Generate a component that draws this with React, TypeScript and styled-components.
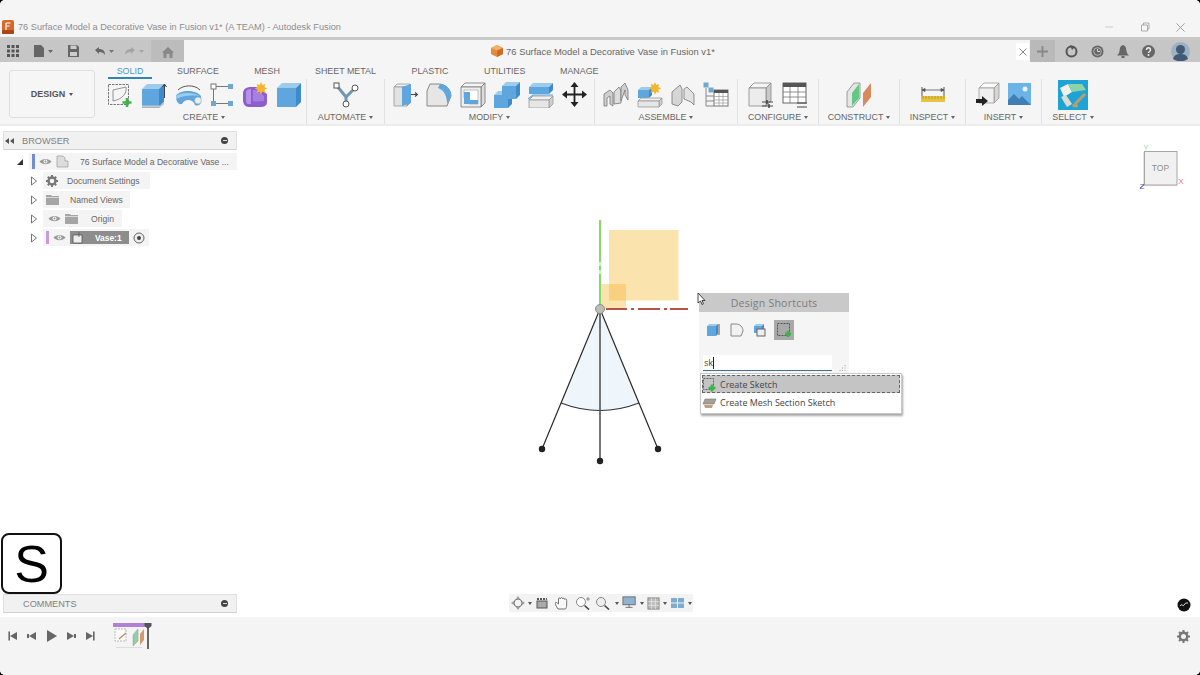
import React from "react";
import styled, { createGlobalStyle } from "styled-components";

const GlobalStyle = createGlobalStyle`
  html, body {
    margin: 0;
    padding: 0;
    background: #000;
  }
  * {
    box-sizing: border-box;
  }
`;

const Window = styled.div`
  width: 1200px;
  height: 675px;
  display: flex;
  flex-direction: column;
  overflow: hidden;
  border-radius: 5px;
  background: #fff;
  font-family: "Liberation Sans", Arial, sans-serif;
  color: #666;
`;

const TitleBar = styled.div`
  height: 37px;
  flex: none;
  display: flex;
  align-items: flex-end;
  padding: 0 0 3px 2px;
  background: #f5f5f5;
`;

const AppTitle = styled.span`
  flex: 1;
  margin-left: 4px;
  font-size: 9.2px;
  line-height: 14px;
  color: #8d8d8d;
`;

const WindowButtons = styled.div`
  display: flex;
  align-items: center;
  gap: 26px;
  padding: 0 15px 2px 0;
`;

const Rule = styled.div`
  height: 3px;
  flex: none;
  background: #c9c9c9;
`;

const TabStrip = styled.div`
  height: 22px;
  flex: none;
  display: flex;
  background: #c6c6c6;
`;

const StripLeft = styled.div`
  width: 151px;
  display: flex;
  align-items: center;
  padding-left: 7px;
  gap: 14.5px;
`;

const RedoSlot = styled.div`
  margin-left: -4px;
`;

const HomeTab = styled.div`
  width: 33px;
  display: flex;
  align-items: center;
  justify-content: center;
  padding-top: 3px;
  background: #bcbcbc;
`;

const DocTab = styled.div`
  flex: 1;
  display: flex;
  align-items: center;
  justify-content: center;
  gap: 3px;
  position: relative;
  padding-right: 8px;
  background: #f5f5f5;
  font-size: 9.4px;
  color: #666;
`;

const TabClose = styled.div`
  position: absolute;
  right: 1px;
  top: 3px;
  width: 13px;
  height: 17px;
  display: flex;
  align-items: center;
  justify-content: center;
  background: #fff;
`;

const StripRight = styled.div`
  width: 170px;
  display: flex;
  align-items: center;
`;

const NewTab = styled.div`
  width: 25px;
  height: 100%;
  margin-right: 3px;
  display: flex;
  align-items: center;
  justify-content: center;
  background: #b9b9b9;
`;

const StripIcon = styled.div<{ $w: number }>`
  width: ${(p) => p.$w}px;
  display: flex;
  justify-content: center;
`;

const Toolbar = styled.div`
  height: 64px;
  flex: none;
  display: flex;
  background: #f5f5f5;
  border-bottom: 2px solid #ececec;
`;

const DesignButton = styled.div`
  width: 86px;
  height: 48px;
  margin: 8px 7px 0 9px;
  display: flex;
  align-items: center;
  justify-content: center;
  gap: 4px;
  background: #f6f6f6;
  border: 1px solid #dedede;
  border-radius: 3px;
  font-size: 9px;
  font-weight: bold;
  color: #555;
`;

const ToolbarBody = styled.div`
  display: flex;
  flex-direction: column;
`;

const TabRow = styled.div`
  height: 17px;
  display: flex;
  padding-left: 6px;
`;

const RibbonTab = styled.div<{ $w: number; $gap: number; $active?: boolean }>`
  width: ${(p) => p.$w}px;
  margin-left: ${(p) => p.$gap}px;
  padding-top: 4px;
  text-align: center;
  font-size: 8.9px;
  line-height: 11px;
  white-space: nowrap;
  color: ${(p) => (p.$active ? "#4a9cc4" : "#666")};
  border-bottom: ${(p) => (p.$active ? "2px solid #2f86ad" : "0")};
`;

const GroupRow = styled.div`
  display: flex;
  height: 45px;
`;

const Group = styled.div<{ $w: number; $last?: boolean }>`
  width: ${(p) => p.$w}px;
  display: flex;
  flex-direction: column;
  align-items: center;
  padding-top: 1px;
  border-right: ${(p) => (p.$last ? "0" : "1px solid #e1e1e1")};
`;

const GroupIcons = styled.div`
  height: 29px;
  display: flex;
  align-items: center;
  gap: 8px;
`;

const GroupLabel = styled.div`
  margin-top: 3px;
  display: flex;
  align-items: center;
  gap: 3px;
  font-size: 8.9px;
  line-height: 11px;
  white-space: nowrap;
  color: #666;
`;

const Caret = styled.span<{ $color?: string }>`
  width: 0;
  height: 0;
  flex: none;
  border-left: 2.5px solid transparent;
  border-right: 2.5px solid transparent;
  border-top: 3px solid ${(p) => p.$color || "#555"};
`;

const Canvas = styled.div`
  flex: 1;
  position: relative;
  background: #fff;
`;

const Panel = styled.div`
  position: absolute;
  left: 3px;
  width: 234px;
  height: 19px;
  display: flex;
  align-items: center;
  background: #f1f1f1;
  border: 1px solid #e0e0e0;
  border-bottom-color: #d2d2d2;
  font-size: 9.2px;
  color: #808080;
`;

const BrowserWrap = styled.div`
  position: absolute;
  left: 0;
  top: 5px;
  width: 240px;
`;

const BrowserHead = styled(Panel)`
  position: static;
  margin-left: 3px;
`;

const PanelName = styled.span`
  flex: 1;
  margin-left: 6px;
`;

const PanelDot = styled.span`
  width: 7px;
  height: 7px;
  margin-right: 8px;
  border-radius: 50%;
  background: #444;
  position: relative;
  &::after {
    content: "";
    position: absolute;
    left: 1.5px;
    top: 3px;
    width: 4px;
    height: 1px;
    background: #ddd;
  }
`;

const CommentsPanel = styled(Panel)`
  top: 468px;
  padding-left: 13px;
`;

const TreeRows = styled.div`
  margin-top: 2px;
  display: flex;
  flex-direction: column;
`;

const TreeRow = styled.div<{ $indent: number }>`
  height: 19px;
  display: flex;
  align-items: center;
  padding-left: ${(p) => p.$indent}px;
`;

const TreeChip = styled.div<{ $w: number; $pad?: number }>`
  width: ${(p) => p.$w}px;
  height: 17px;
  margin-left: 5px;
  display: flex;
  align-items: center;
  gap: 4px;
  padding-left: ${(p) => p.$pad ?? 3}px;
  background: #f4f4f4;
  font-size: 8.6px;
  color: #666;
  white-space: nowrap;
`;

const TreeLabel = styled.span<{ $ml: number }>`
  margin-left: ${(p) => p.$ml}px;
`;

const ColorBar = styled.span<{ $color: string; $h: number }>`
  width: 3px;
  height: ${(p) => p.$h}px;
  flex: none;
  background: ${(p) => p.$color};
`;

const ActiveName = styled.span`
  width: 59px;
  height: 13px;
  display: flex;
  align-items: center;
  background: #8d8d8d;
  color: #fff;
  font-weight: bold;
  font-size: 8.4px;
`;

const Drawing = styled.svg`
  position: absolute;
  left: 530px;
  top: 84px;
`;

const ViewCube = styled.svg`
  position: absolute;
  left: 1130px;
  top: 14px;
`;

const Cursor = styled.svg`
  position: absolute;
  left: 697px;
  top: 166px;
  z-index: 3;
`;

const Shortcuts = styled.div`
  position: absolute;
  left: 699px;
  top: 167px;
  width: 150px;
  height: 80px;
  background: #f5f5f5;
`;

const ShortcutsHead = styled.div`
  height: 19px;
  background: #c9c9c9;
  text-align: center;
  font-family: "Open Sans", sans-serif;
  font-size: 10.6px;
  line-height: 20px;
  letter-spacing: 0.2px;
  color: #7d7d7d;
`;

const ShortcutIcons = styled.div`
  height: 22px;
  margin-top: 7px;
  padding-left: 4px;
  display: flex;
  align-items: center;
  gap: 3.5px;
`;

const ShortcutSlot = styled.div<{ $on?: boolean }>`
  width: 20px;
  height: 20px;
  display: flex;
  align-items: center;
  justify-content: center;
  background: ${(p) => (p.$on ? "#a9a9a9" : "transparent")};
`;

const SearchBox = styled.div`
  width: 129px;
  height: 16px;
  margin: 14px 0 0 4px;
  padding-left: 1px;
  display: flex;
  align-items: center;
  background: #fff;
  border-bottom: 1px solid #3e6f95;
  font-family: "Open Sans", sans-serif;
  font-size: 9px;
  color: #444;
`;

const Caretline = styled.span`
  width: 1px;
  height: 12px;
  background: #222;
`;

const Grip = styled.svg`
  position: absolute;
  right: 2px;
  bottom: 1px;
`;

const Results = styled.div`
  position: absolute;
  left: 700px;
  top: 247px;
  width: 202px;
  height: 41px;
  padding: 1px;
  background: #fff;
  border: 1px solid #c8c8c8;
  box-shadow: 1px 2px 2px rgba(0, 0, 0, 0.35);
  z-index: 2;
`;

const ResultRow = styled.div<{ $on?: boolean }>`
  height: 18px;
  display: flex;
  align-items: center;
  gap: 3px;
  padding: ${(p) => (p.$on ? "0" : "1px")} 0 0 0;
  font-family: "Open Sans", sans-serif;
  font-size: 8.95px;
  color: #444;
  background: ${(p) => (p.$on ? "#c4c4c4" : "transparent")};
  outline: ${(p) => (p.$on ? "1px dashed #666" : "0")};
  outline-offset: -1px;
`;

const Badge = styled.div`
  position: absolute;
  left: 1px;
  top: 407px;
  width: 61px;
  height: 61px;
  display: flex;
  align-items: center;
  justify-content: center;
  background: #fff;
  border: 2px solid #111;
  border-radius: 8px;
  font-size: 52px;
  line-height: 1;
  color: #000;
`;

const NavBar = styled.div`
  position: absolute;
  left: 509px;
  top: 468px;
  width: 184px;
  height: 18px;
  display: flex;
  align-items: center;
  gap: 3px;
  padding-left: 2px;
  background: #f3f3f3;
`;

const ChatDot = styled.svg`
  position: absolute;
  left: 1177px;
  top: 472px;
`;

const Timeline = styled.div`
  height: 58px;
  flex: none;
  display: flex;
  align-items: center;
  padding: 0 10px 20px 8px;
  background: #f4f4f4;
`;

const Transport = styled.div`
  width: 105px;
  display: flex;
  align-items: center;
  gap: 9px;
`;

const TimelineTrack = styled.div`
  flex: 1;
`;

function Glyph({ w = 26, h = 26, vb, children }: { w?: number; h?: number; vb?: string; children: React.ReactNode }) {
  return (
    <svg width={w} height={h} viewBox={vb || `0 0 ${w} ${h}`} style={{ display: "block", flex: "none" }}>
      {children}
    </svg>
  );
}

type BoxProps = { x: number; y: number; w: number; h: number; d: number; front?: string; top?: string; side?: string; stroke?: string };

// little isometric block, the app's icons are mostly built from these
function Box({ x, y, w, h, d, front = "#5ea6dd", top = "#9ccbec", side = "#3f8bc9", stroke = "none" }: BoxProps) {
  return (
    <g stroke={stroke} strokeWidth={0.8} strokeLinejoin="round">
      <polygon fill={top} points={`${x},${y + d} ${x + d},${y} ${x + w + d},${y} ${x + w},${y + d}`} />
      <polygon fill={side} points={`${x + w},${y + d} ${x + w + d},${y} ${x + w + d},${y + h} ${x + w},${y + d + h}`} />
      <polygon fill={front} points={`${x},${y + d} ${x + w},${y + d} ${x + w},${y + d + h} ${x},${y + d + h}`} />
    </g>
  );
}

const GreenPlus = ({ x, y, s = 4.5 }: { x: number; y: number; s?: number }) => (
  <path d={`M${x - s} ${y}H${x + s}M${x} ${y - s}V${y + s}`} stroke="#3bb54a" strokeWidth={2.6} />
);

const SketchIcon = () => (
  <Glyph>
    <rect x="1.5" y="2.5" width="20" height="20" fill="none" stroke="#777" strokeWidth="1" strokeDasharray="2.5 1" />
    <path d="M6 19V8L19 5M19 5C20 11 16 17 6 19" fill="none" stroke="#888" strokeWidth="0.9" />
    <GreenPlus x={20} y={20.5} />
  </Glyph>
);
const ExtrudeIcon = () => (
  <Glyph>
    <Box x={1} y={2} w={17} h={19} d={5} />
    <path d="M1 23.5h18l4-4v3l-4 3H1z" fill="#c9c9c9" />
    <path d="M23.5 16V2M21.5 5l2-3 2 3" stroke="#444" strokeWidth="1" fill="none" />
  </Glyph>
);
const RevolveIcon = () => (
  <Glyph w={27}>
    <path d="M1 14C4 8 20 7 26 14V20C25 24 22 24 20 23C18 17 10 16 7 22C3 23 1 19 1 14z" fill="#5ea6dd" />
    <path d="M1 14C5 10 19 10 25 14C19 13 8 13 1 17z" fill="#9ccbec" />
    <circle cx="23" cy="18.500" r="3.500" fill="#e6eef4" stroke="#9aa9b4" strokeWidth="0.7" />
    <path d="M3 8C8 3 19 2 25 8" fill="none" stroke="#555" strokeWidth="1" />
  </Glyph>
);
const PatternIcon = () => (
  <Glyph w={24}>
    <rect x="1" y="2" width="5" height="5" fill="#fff" stroke="#777" />
    <rect x="18" y="2" width="5" height="5" fill="#6fa8cf" />
    <rect x="1" y="19" width="5" height="5" fill="#6fa8cf" />
    <rect x="18" y="19" width="5" height="5" fill="#6fa8cf" />
    <path d="M6 4.5h12M6 21.5h12M3.5 7v12" stroke="#777" strokeWidth="1" />
  </Glyph>
);
const FormIcon = () => (
  <Glyph>
    <path d="M1 12C1 7 4 5 9 5H15L25 12V20C25 24 22 25 18 25H7C3 25 1 22 1 18z" fill="#8d5fcc" />
    <path d="M4 10c0-2 2-3 5-3v15H6c-1 0-2-1-2-3z" fill="#b590e8" />
    <path d="M11 8h3l8 6v5c-3 0-7 1-11 0z" fill="#a77fe0" />
    <path d="M19 0l1.4 3 3-1-1 3 3 1.4-3 1.4 1 3-3-1-1.4 3-1.4-3-3 1 1-3-3-1.4 3-1.4-1-3 3 1z" fill="#f2b632" />
  </Glyph>
);
const BoxIcon = () => (
  <Glyph>
    <Box x={1} y={1} w={19} h={19} d={5} />
  </Glyph>
);
const PressPullIcon = () => (
  <Glyph w={25}>
    <Box x={1} y={2} w={13} h={19} d={3} front="#e2e2e2" side="#4f9ad4" top="#efefef" stroke="#999" />
    <polygon points="9,5 18,2 18,21 9,24" fill="#5ea6dd" />
    <path d="M18 12.5h6M22 10.5l2.5 2-2.5 2" stroke="#444" strokeWidth="1.2" fill="none" />
  </Glyph>
);
const FilletIcon = () => (
  <Glyph>
    <path d="M1 24V9l3-7h9c6 0 12 5 12 12l-4 10z" fill="#e6e6e6" stroke="#888" />
    <path d="M14 2c6 0 11 5 11 12l-4 8c0-8-3-14-9-16z" fill="#5ea6dd" />
  </Glyph>
);
const ShellIcon = () => (
  <Glyph>
    <Box x={1} y={1} w={20} h={20} d={4} front="#efefef" side="#dcdcdc" top="#f5f5f5" stroke="#777" />
    <path d="M4 8h14v14H9v-6H4z" fill="#fff" stroke="#999" strokeWidth="0.6" />
    <path d="M4 10h6v12H4zM10 18h8v4h-8z" fill="#5ea6dd" />
  </Glyph>
);
const CombineIcon = () => (
  <Glyph>
    <Box x={0} y={9} w={14} h={13} d={4} />
    <Box x={8} y={0} w={14} h={13} d={4} />
  </Glyph>
);
const OffsetIcon = () => (
  <Glyph>
    <Box x={1} y={14} w={20} h={8} d={4} front="#e6e6e6" side="#cfcfcf" top="#f0f0f0" stroke="#999" />
    <Box x={1} y={1} w={20} h={7} d={4} />
    <path d="M0 17l5-4h20" stroke="#5ea6dd" strokeWidth="1.2" fill="none" />
  </Glyph>
);
const MoveIcon = () => (
  <Glyph w={25}>
    <path d="M12.5 3v19M3 12.5h19" stroke="#222" strokeWidth="1.8" />
    <path d="M12.5 0l4 5h-8zM12.5 25l4-5h-8zM0 12.5l5-4v8zM25 12.5l-5-4v8z" fill="#222" />
  </Glyph>
);
const WingsIcon = () => (
  <Glyph>
    <path d="M1 24V12l6-4 3 3V24l-3-2V14l-3 2v8z" fill="#cfcfcf" stroke="#777" strokeWidth="0.8" />
    <path d="M11 22V10l5-5 2 4v12z" fill="#dcdcdc" stroke="#777" strokeWidth="0.8" />
    <path d="M18 19V5l4-4 3 7v10l-3-5v-5z" fill="#cfcfcf" stroke="#777" strokeWidth="0.8" />
  </Glyph>
);
const NewComponentIcon = () => (
  <Glyph>
    <Box x={1} y={5} w={11} h={8} d={3} />
    <Box x={1} y={16} w={21} h={6} d={3} front="#e6e6e6" side="#cfcfcf" top="#efefef" stroke="#999" />
    <path d="M18 0l1.3 3 3-1-1 3 3 1.3-3 1.4 1 3-3-1-1.3 3-1.4-3-3 1 1-3-3-1.4 3-1.3-1-3 3 1z" fill="#f2b632" />
  </Glyph>
);
const JointIcon = () => (
  <Glyph w={24}>
    <path d="M1 22V10l8-7 2 4v13l-4 4z" fill="#d6d6d6" stroke="#777" strokeWidth="0.8" />
    <path d="M13 7l3-2 7 7v11l-3-3-7-3z" fill="#e2e2e2" stroke="#777" strokeWidth="0.8" />
  </Glyph>
);
const BomIcon = () => (
  <Glyph>
    <rect x="0.5" y="0.5" width="5" height="5" fill="#6fa8cf" />
    <rect x="5.5" y="5.5" width="5" height="5" fill="#6fa8cf" />
    <path d="M3 6v18M3 14h8M3 19h8M3 24h8" stroke="#888" fill="none" />
    <rect x="11" y="8" width="14" height="16" fill="#fff" stroke="#777" />
    <rect x="11" y="8" width="14" height="3" fill="#555" />
    <path d="M11 14.5h14M11 18h14M11 21h14M16 11v13M20 11v13" stroke="#999" strokeWidth="0.7" />
  </Glyph>
);
const ConfigureIcon = () => (
  <Glyph>
    <Box x={1} y={1} w={17} h={18} d={5} front="#ececec" side="#c9c9c9" top="#f5f5f5" stroke="#888" />
    <path d="M14 20h11M14 24h11" stroke="#444" strokeWidth="1" />
    <path d="M19 18v4M21 22v4" stroke="#444" strokeWidth="1.5" />
  </Glyph>
);
const TableIcon = () => (
  <Glyph>
    <rect x="1" y="1" width="23" height="20" fill="#fff" stroke="#666" />
    <rect x="1" y="1" width="23" height="4" fill="#555" />
    <path d="M1 10h23M1 15h23M8 5v16M16 5v16" stroke="#777" strokeWidth="0.8" />
    <path d="M15 21h10M15 25h10" stroke="#444" strokeWidth="1" />
  </Glyph>
);
const ConstructIcon = () => (
  <Glyph>
    <polygon points="1,10 8,1 14,1 14,16 7,25 1,25" fill="#e5e5e5" stroke="#888" strokeWidth="0.8" />
    <polygon points="6,11 13,2 13,16 6,24" fill="#62c983" />
    <polygon points="17,11 25,1 25,15 17,25" fill="#d98a5b" />
  </Glyph>
);
const InspectIcon = () => (
  <Glyph>
    <path d="M2 5v9M24 5v9" stroke="#555" strokeWidth="1" />
    <path d="M2 8h22M2 8l3-1.5v3zM24 8l-3-1.5v3z" stroke="#555" strokeWidth="0.8" fill="#555" />
    <rect x="1" y="14" width="24" height="6" fill="#e6c342" />
    <path d="M3 14v3M6 14v3M9 14v3M12 14v3M15 14v3M18 14v3M21 14v3M24 14v3" stroke="#a5871c" strokeWidth="0.7" />
  </Glyph>
);
const InsertIcon = () => (
  <Glyph w={24}>
    <Box x={3} y={1} w={15} h={15} d={5} front="#f0f0f0" side="#d6d6d6" top="#fafafa" stroke="#999" />
    <path d="M0 17h6v-3l6 5-6 5v-3H0z" fill="#222" />
  </Glyph>
);
const PictureIcon = () => (
  <Glyph w={24} h={23}>
    <rect width="23" height="22" fill="#6cb3e8" />
    <circle cx="17" cy="6" r="2.5" fill="#e9f5fd" />
    <path d="M0 22V17l6-6 5 5 3-3 9 9z" fill="#3f7fb6" />
  </Glyph>
);
const SelectIcon = () => (
  <Glyph w={30} h={30}>
    <rect width="30" height="30" fill="#1fa3d4" />
    <polygon points="2,8 10,4 14,12 6,17" fill="#eef1ee" />
    <polygon points="10,4 24,4 28,10 14,12" fill="#8bd3a8" />
    <polygon points="3,17 8,15 14,24 9,27" fill="#dcdcd2" />
    <path d="M27 14L17 24" stroke="#b79d70" strokeWidth="3" />
    <path d="M20 27c-3 1-6 0-6-2l3-2 3 2z" fill="#b79d70" />
  </Glyph>
);

function AutomateIcon() {
  return (
    <Glyph>
      <path d="M4 4l9 11 9-9M13 15v6" fill="none" stroke="#6f98b0" strokeWidth="3" />
      <rect x="1" y="1" width="5" height="5" fill="#fff" stroke="#555" />
      <circle cx="22" cy="6" r="3" fill="#fff" stroke="#555" />
      <circle cx="13" cy="22" r="3" fill="#fff" stroke="#555" />
    </Glyph>
  );
}

const groups = [
  { label: "CREATE", w: 205, icons: [SketchIcon, ExtrudeIcon, RevolveIcon, PatternIcon, FormIcon, BoxIcon] },
  { label: "AUTOMATE", w: 78, icons: [AutomateIcon] },
  { label: "MODIFY", w: 210, icons: [PressPullIcon, FilletIcon, ShellIcon, CombineIcon, OffsetIcon, MoveIcon] },
  { label: "ASSEMBLE", w: 143, icons: [WingsIcon, NewComponentIcon, JointIcon, BomIcon] },
  { label: "CONFIGURE", w: 81, icons: [ConfigureIcon, TableIcon] },
  { label: "CONSTRUCT", w: 81, icons: [ConstructIcon] },
  { label: "INSPECT", w: 66, icons: [InspectIcon] },
  { label: "INSERT", w: 76, icons: [InsertIcon, PictureIcon] },
  { label: "SELECT", w: 62, icons: [SelectIcon] },
];

const ribbonTabs = [
  { name: "SOLID", w: 44, gap: 0, active: true },
  { name: "SURFACE", w: 56, gap: 18 },
  { name: "MESH", w: 28, gap: 27 },
  { name: "SHEET METAL", w: 60, gap: 34 },
  { name: "PLASTIC", w: 38, gap: 36 },
  { name: "UTILITIES", w: 40, gap: 35 },
  { name: "MANAGE", w: 38, gap: 36 },
];

const EyeIcon = ({ color = "#9a9a9a" }: { color?: string }) => (
  <Glyph w={13} h={9}>
    <path d="M.5 4.5C3 1 10 1 12.5 4.5 10 8 3 8 .5 4.5z" fill={color} />
    <circle cx="6.5" cy="4.5" r="2" fill="#f4f4f4" />
    <circle cx="6.5" cy="4.5" r="1" fill={color} />
  </Glyph>
);
const FolderIcon = () => (
  <Glyph w={13} h={11}>
    <path d="M0 1h5l1 1h7v9H0z" fill="#a5a5a5" />
    <rect y="3" width="13" height="1" fill="#d8d8d8" />
  </Glyph>
);
const Arrow = ({ solid = false }: { solid?: boolean }) => (
  <Glyph w={8} h={10}>
    {solid ? (
      <path d="M1 8h6V2z" fill="#333" />
    ) : (
      <path d="M1.5 1l5 4-5 4z" fill="#fff" stroke="#666" strokeWidth="0.9" />
    )}
  </Glyph>
);

const CloseX = ({ s = 8, color = "#777" }: { s?: number; color?: string }) => (
  <Glyph w={s} h={s}>
    <path d={`M.5 .5L${s - 0.5} ${s - 0.5}M${s - 0.5} .5L.5 ${s - 0.5}`} stroke={color} strokeWidth="0.9" />
  </Glyph>
);

const Tri = ({ flip = false, bar = false, dot = false, big = false }: { flip?: boolean; bar?: boolean; dot?: boolean; big?: boolean }) => (
  <Glyph w={big ? 11 : 10} h={12}>
    <g transform={flip ? `translate(${big ? 11 : 10} 0) scale(-1 1)` : undefined} fill="#666">
      <path d={big ? "M1 0l10 6-10 6z" : "M1 2l7 4-7 4z"} />
      {bar && <rect x="8" y="1.5" width="1.6" height="9" />}
      {dot && <rect x="8" y="4" width="2" height="4" />}
    </g>
  </Glyph>
);

export default function App() {
  return (
    <>
      <GlobalStyle />
      <Window>
        <TitleBar>
          <Glyph w={12} h={14}>
            <rect width="12" height="14" rx="2" fill="#d9682b" />
            <rect y="10" width="12" height="4" rx="1" fill="#a8481a" />
            <path d="M4 3h4.5M4 3v7M4 6h3.5" stroke="#fff" strokeWidth="1.2" fill="none" />
          </Glyph>
          <AppTitle>76 Surface Model a Decorative Vase in Fusion v1* (A TEAM) - Autodesk Fusion</AppTitle>
          <WindowButtons>
            <Glyph w={10} h={8}>
              <path d="M1 4h8" stroke="#ccc" />
            </Glyph>
            <Glyph w={10} h={10}>
              <path d="M1.5 3h6v6h-6zM3.5 3V1h5.5v6H7.5" fill="none" stroke="#999" strokeWidth="0.8" />
            </Glyph>
            <CloseX s={9} color="#999" />
          </WindowButtons>
        </TitleBar>
        <Rule />
        <TabStrip>
          <StripLeft>
            <Glyph w={12} h={12}>
              <path d="M0 0h3v3H0zM4.5 0h3v3h-3zM9 0h3v3H9zM0 4.5h3v3H0zM4.5 4.5h3v3h-3zM9 4.5h3v3H9zM0 9h3v3H0zM4.5 9h3v3h-3zM9 9h3v3H9z" fill="#555" />
            </Glyph>
            <Glyph w={20} h={12}>
              <path d="M0 0h7l3 3v9H0z" fill="#666" />
              <path d="M14 5h5l-2.5 3z" fill="#666" />
            </Glyph>
            <Glyph w={11} h={12}>
              <path d="M0 0h9l2 2v10H0z" fill="#666" />
              <rect x="2.5" y="0.5" width="6" height="3.5" fill="#ccc" />
              <rect x="2" y="7" width="7" height="4" fill="#ccc" />
            </Glyph>
            <Glyph w={20} h={10}>
              <path d="M1 4l4-3v2c4 0 6 2 6 6-1-2-3-3-6-3v2z" fill="#666" />
              <path d="M15 4h5l-2.5 3z" fill="#777" />
            </Glyph>
            <RedoSlot>
              <Glyph w={20} h={10}>
                <path d="M11 4L7 1v2C3 3 1 5 1 9c1-2 3-3 6-3v2z" fill="#a5a5a5" />
                <path d="M15 4h5l-2.5 3z" fill="#a5a5a5" />
              </Glyph>
            </RedoSlot>
          </StripLeft>
          <HomeTab>
            <Glyph w={12} h={11}>
              <path d="M6 0l6 5.5h-1.5V11h-3V7h-3v4h-3V5.5H0z" fill="#888" />
            </Glyph>
          </HomeTab>
          <DocTab>
            <Glyph w={12} h={12}>
              <polygon points="6,0 12,3 12,9 6,12 0,9 0,3" fill="#e58a3c" />
              <polygon points="6,0 12,3 6,5.5 0,3" fill="#f0b070" />
              <polygon points="6,5.5 12,3 12,9 6,12" fill="#cc6c28" />
            </Glyph>
            76 Surface Model a Decorative Vase in Fusion v1*
            <TabClose>
              <CloseX />
            </TabClose>
          </DocTab>
          <StripRight>
            <NewTab>
              <Glyph w={11} h={11}>
                <path d="M5.5 0v11M0 5.5h11" stroke="#888" strokeWidth="1.8" />
              </Glyph>
            </NewTab>
            <StripIcon $w={26}>
              <Glyph w={13} h={13}>
                <circle cx="6.5" cy="6.5" r="5" fill="none" stroke="#555" strokeWidth="2" />
                <path d="M5 0l5 2-3 3z" fill="#555" />
              </Glyph>
            </StripIcon>
            <StripIcon $w={26}>
              <Glyph w={13} h={13}>
                <circle cx="6.5" cy="6.5" r="6" fill="#666" />
                <circle cx="6.5" cy="6.5" r="3.8" fill="none" stroke="#ccc" strokeWidth="0.8" />
                <path d="M6.5 4v2.5H9" stroke="#ddd" fill="none" />
              </Glyph>
            </StripIcon>
            <StripIcon $w={25}>
              <Glyph w={12} h={13}>
                <path d="M6 0c3 1 3 3 3.5 6 .3 2 1 3 2.5 4.5H0C1.500 9 2.200 8 2.500 6 3 3 3 1 6 0z" fill="#666" />
                <rect x="4.500" y="11" width="3" height="2" fill="#666" />
              </Glyph>
            </StripIcon>
            <StripIcon $w={26}>
              <Glyph w={13} h={13}>
                <circle cx="6.5" cy="6.5" r="6.500" fill="#666" />
                <path d="M4.500 5c0-3 4-3 4 0 0 1.500-2 1.500-2 3" stroke="#eee" strokeWidth="1.400" fill="none" />
                <circle cx="6.500" cy="10" r="1" fill="#eee" />
              </Glyph>
            </StripIcon>
            <StripIcon $w={39}>
              <Glyph w={19} h={19}>
                <circle cx="9.500" cy="9.500" r="9.500" fill="#9db0c4" />
                <circle cx="9.500" cy="7.500" r="4.500" fill="#425a75" />
                <path d="M2 17c1-4 4-5 7.500-5s6.500 1 7.500 5c-4 3-11 3-15 0z" fill="#425a75" />
              </Glyph>
            </StripIcon>
          </StripRight>
        </TabStrip>

        <Toolbar>
          <DesignButton>
            DESIGN <Caret />
          </DesignButton>
          <ToolbarBody>
            <TabRow>
              {ribbonTabs.map((t) => (
                <RibbonTab key={t.name} $w={t.w} $gap={t.gap} $active={t.active}>
                  {t.name}
                </RibbonTab>
              ))}
            </TabRow>
            <GroupRow>
              {groups.map((g, i) => (
                <Group key={g.label} $w={g.w} $last={i === groups.length - 1}>
                  <GroupIcons>
                    {g.icons.map((Icon, idx) => (
                      <Icon key={idx} />
                    ))}
                  </GroupIcons>
                  <GroupLabel>
                    {g.label}
                    <Caret $color="#666" />
                  </GroupLabel>
                </Group>
              ))}
            </GroupRow>
          </ToolbarBody>
        </Toolbar>

        <Canvas>
          <BrowserWrap>
            <BrowserHead>
              <Glyph w={12} h={8} vb="-6 0 12 8">
                <path d="M-1 1L-5 4l4 3zM4 1L0 4l4 3z" fill="#555" />
              </Glyph>
              <PanelName>BROWSER</PanelName>
              <PanelDot />
            </BrowserHead>
            <TreeRows>
              <TreeRow $indent={16}>
                <Arrow solid />
                <TreeChip $w={208}>
                  <ColorBar $color="#6f8fd0" $h={15} />
                  <EyeIcon />
                  <Glyph w={13} h={13}>
                    <path d="M1 1h6l2 2v3h3v6H1z" fill="#ddd" stroke="#999" strokeWidth="0.7" />
                  </Glyph>
                  <TreeLabel $ml={7}>76 Surface Model a Decorative Vase ...</TreeLabel>
                </TreeChip>
              </TreeRow>
              <TreeRow $indent={30}>
                <Arrow />
                <TreeChip $w={107}>
                  <Glyph w={12} h={12}>
                    <circle cx="6" cy="6" r="3.500" fill="none" stroke="#777" strokeWidth="2.400" />
                    <path d="M6 0v2M6 10v2M0 6h2M10 6h2M1.800 1.800l1.400 1.400M8.800 8.800l1.400 1.400M1.800 10.200l1.400-1.400M8.800 3.200l1.400-1.400" stroke="#777" strokeWidth="2" />
                  </Glyph>
                  <TreeLabel $ml={5}>Document Settings</TreeLabel>
                </TreeChip>
              </TreeRow>
              <TreeRow $indent={30}>
                <Arrow />
                <TreeChip $w={87}>
                  <FolderIcon />
                  <TreeLabel $ml={7}>Named Views</TreeLabel>
                </TreeChip>
              </TreeRow>
              <TreeRow $indent={30}>
                <Arrow />
                <TreeChip $w={79} $pad={5}>
                  <EyeIcon />
                  <FolderIcon />
                  <TreeLabel $ml={9}>Origin</TreeLabel>
                </TreeChip>
              </TreeRow>
              <TreeRow $indent={30}>
                <Arrow />
                <TreeChip $w={106}>
                  <ColorBar $color="#c79ad8" $h={13} />
                  <EyeIcon />
                  <ActiveName>
                    <Glyph w={25} h={13}>
                      <path d="M3 4h9v8H3zM9 1v5" fill="#eee" stroke="#555" strokeWidth="0.8" />
                    </Glyph>
                    Vase:1
                  </ActiveName>
                  <Glyph w={12} h={12}>
                    <circle cx="6" cy="6" r="5" fill="#eee" stroke="#666" />
                    <circle cx="6" cy="6" r="2" fill="#444" />
                  </Glyph>
                </TreeChip>
              </TreeRow>
            </TreeRows>
          </BrowserWrap>

          <ViewCube width="62" height="52" viewBox="1130 140 62 52">
            <path d="M1144 152V185" stroke="#a8dca8" strokeWidth="1" />
            <path d="M1144 185H1177" stroke="#e6a6a6" strokeWidth="1" />
            <path d="M1144 185L1140 188" stroke="#6c6cc8" strokeWidth="1" />
            <rect x="1144.500" y="151.500" width="32.500" height="33.500" fill="#f1f1f1" stroke="#a6a6a6" />
            <text x="1160.500" y="171" textAnchor="middle" fontSize="8.500" fontFamily="Liberation Sans" fill="#8f8f8f">TOP</text>
            <text x="1146" y="149.500" textAnchor="middle" fontSize="8" fontFamily="Liberation Sans" fill="#8fdc9a">Y</text>
            <text x="1181" y="184" textAnchor="middle" fontSize="8" fontFamily="Liberation Sans" fill="#e57a7a">X</text>
            <text x="1142" y="189" textAnchor="middle" fontSize="8" fontFamily="Liberation Sans" fill="#5a5ac0">Z</text>
          </ViewCube>

          <Drawing width="170" height="260" viewBox="530 210 170 260">
            <rect x="609" y="230" width="69.500" height="70.500" fill="#fbe3ae" />
            <rect x="601" y="284" width="25" height="25" fill="#fbe3ae" />
            <rect x="609" y="284" width="17" height="16.500" fill="#f9cf80" />
            <path d="M600 220V305" stroke="#c9efb8" strokeWidth="1.800" />
            <path d="M600 220V262M600 266V270M600 274V305" stroke="#7fd85c" strokeWidth="1.800" />
            <path d="M606 309H627M631 309H634M638 309H660M664 309H667M670 309H688" stroke="#bb4f4a" strokeWidth="1.800" />
            <path d="M600 309L561 403Q600 418 639 403Z" fill="#eef5fb" />
            <path d="M561 403Q600 418 639 403" fill="none" stroke="#333" strokeWidth="1.200" />
            <path d="M600 309L542 449M600 309L658 449" stroke="#2a2a2a" strokeWidth="1.200" />
            <path d="M600 309V461" stroke="#555" strokeWidth="1.600" />
            <circle cx="542" cy="449" r="3.200" fill="#222" />
            <circle cx="658" cy="449" r="3.200" fill="#222" />
            <circle cx="600" cy="461" r="3.200" fill="#222" />
            <circle cx="600" cy="309" r="4.500" fill="#bdbdb2" stroke="#8d8d8d" />
          </Drawing>

          <Shortcuts>
            <ShortcutsHead>Design Shortcuts</ShortcutsHead>
            <ShortcutIcons>
              <ShortcutSlot>
                <Glyph w={14} h={14}>
                  <Box x={1} y={1} w={9} h={10} d={2} />
                  <path d="M13 1v11" stroke="#555" />
                </Glyph>
              </ShortcutSlot>
              <ShortcutSlot>
                <Glyph w={14} h={14}>
                  <path d="M1 13V1h5c4 0 7 3 7 7l-2 5z" fill="#f2f2f2" stroke="#888" />
                </Glyph>
              </ShortcutSlot>
              <ShortcutSlot>
                <Glyph w={14} h={14}>
                  <Box x={1} y={1} w={8} h={7} d={2} />
                  <rect x="4" y="6" width="8" height="7" fill="#eee" stroke="#666" />
                </Glyph>
              </ShortcutSlot>
              <ShortcutSlot $on>
                <Glyph w={16} h={16}>
                  <rect x="1.500" y="1.500" width="12" height="12" fill="none" stroke="#555" strokeDasharray="2 1" />
                  <GreenPlus x={12} y={12} s={3} />
                </Glyph>
              </ShortcutSlot>
            </ShortcutIcons>
            <SearchBox>
              sk
              <Caretline />
            </SearchBox>
            <Grip width="8" height="8" viewBox="0 0 8 8">
              <path d="M6 1v1M3.500 3.500v1M6 3.500v1M1 6v1M3.500 6v1M6 6v1" stroke="#aaa" />
            </Grip>
          </Shortcuts>

          <Results>
            <ResultRow $on>
              <Glyph w={15} h={15}>
                <rect x="1.500" y="1.500" width="10" height="11" fill="none" stroke="#666" strokeDasharray="2 1" />
                <GreenPlus x={10} y={11} s={3.5} />
              </Glyph>
              Create Sketch
            </ResultRow>
            <ResultRow>
              <Glyph w={15} h={12}>
                <path d="M3 2h11l-2 5H1z" fill="#a5a097" stroke="#777" strokeWidth="0.6" />
                <path d="M2 8h9l-1 3H3z" fill="#c3a07c" />
              </Glyph>
              Create Mesh Section Sketch
            </ResultRow>
          </Results>

          <Cursor width="10" height="14" viewBox="0 0 10 14">
            <path d="M1 1v10l2.500-2 1.500 3.500 1.500-.7L5 8.500h3z" fill="#fff" stroke="#333" strokeWidth="0.9" />
          </Cursor>

          <Badge>S</Badge>

          <CommentsPanel>
            <PanelName>COMMENTS</PanelName>
            <PanelDot />
          </CommentsPanel>

          <NavBar>
            <Glyph w={14} h={14}>
              <circle cx="7" cy="7" r="4" fill="none" stroke="#777" />
              <path d="M7 0l2 3H5zM7 14l2-3H5zM0 7l3-2v4zM14 7l-3-2v4z" fill="#999" />
            </Glyph>
            <Caret />
            <Glyph w={14} h={14}>
              <rect x="2" y="5" width="10" height="7" fill="#aaa" stroke="#555" />
              <path d="M2 3h10" stroke="#555" strokeWidth="2" strokeDasharray="2 1" />
            </Glyph>
            <Glyph w={20} h={14} vb="-1 0 20 14">
              <path d="M5 13C3 10 2 8 2.500 6.500 4 6 5 8 5.500 8V3c0-1.500 1.500-1.500 2 0 0-2 2-2 2.200 0 .5-1.500 2-1 2 .5.800-1 2-.5 2 .8V9c0 2-.7 3-1.200 4z" fill="#f7f7f7" stroke="#666" strokeWidth="0.9" />
            </Glyph>
            <Glyph w={17} h={14}>
              <circle cx="6" cy="6" r="4.500" fill="#fff" stroke="#888" />
              <path d="M9.500 9.500L14 13.500" stroke="#444" strokeWidth="1.600" />
              <path d="M13 1v4M11 3h4" stroke="#777" strokeWidth="0.8" />
            </Glyph>
            <Glyph w={17} h={14}>
              <circle cx="6" cy="6" r="4.500" fill="#eee" stroke="#888" />
              <path d="M9.500 9.500L14 13.500" stroke="#444" strokeWidth="1.600" />
            </Glyph>
            <Caret />
            <Glyph w={15} h={14} vb="0 0 17 16">
              <rect x="1" y="1" width="14" height="9" fill="#8fb3d0" stroke="#666" />
              <path d="M8 10v3M4 13h8" stroke="#666" />
            </Glyph>
            <Caret />
            <Glyph w={13} h={13} vb="0 0 14 14">
              <rect x="1" y="1" width="12" height="12" fill="#bbb" stroke="#888" />
              <path d="M1 5h12M1 9h12M5 1v12M9 1v12" stroke="#eee" strokeWidth="0.7" />
            </Glyph>
            <Caret />
            <Glyph w={15} h={14}>
              <rect x="1" y="2" width="13" height="10" fill="#7fabd0" />
              <path d="M7.500 2v10M1 7h13" stroke="#f3f3f3" />
            </Glyph>
            <Caret />
          </NavBar>

          <ChatDot width="14" height="14" viewBox="0 0 14 14">
            <circle cx="7" cy="7" r="6.500" fill="#111" />
            <path d="M3 8c2-3 3 1 4-1s2-2 4-2" stroke="#fff" fill="none" strokeWidth="0.9" />
          </ChatDot>
        </Canvas>

        <Timeline>
          <Transport>
            <Tri flip bar />
            <Tri flip dot />
            <Tri big />
            <Tri dot />
            <Tri bar />
          </Transport>
          <TimelineTrack>
            <Glyph w={42} h={27}>
              <rect width="33" height="4" fill="#b27fd9" />
              <rect x="2" y="6" width="11" height="12" fill="#fafafa" stroke="#aaa" strokeWidth="0.8" strokeDasharray="2 1" />
              <path d="M6 16l7-6" stroke="#b08a60" strokeWidth="1.200" />
              <polygon points="20,12 25,6 25,18 20,23" fill="#8fd0a4" stroke="#999" strokeWidth="0.5" />
              <polygon points="27,11 31,6 31,17 27,22" fill="#d39a6f" />
              <path d="M3 24.500h26" stroke="#ddd" />
              <rect x="34" y="2" width="2" height="24" fill="#666" />
              <path d="M31.500 0h7v3l-3.500 3L31.500 3z" fill="#555" />
            </Glyph>
          </TimelineTrack>
          <Glyph w={13} h={13}>
            <circle cx="6.500" cy="6.500" r="3.700" fill="none" stroke="#777" strokeWidth="2.400" />
            <path d="M6.500 0v2.500M6.500 10.500V13M0 6.500h2.500M10.500 6.500H13M2 2l1.700 1.700M9.300 9.300L11 11M2 11l1.700-1.700M9.300 3.700L11 2" stroke="#777" strokeWidth="2" />
          </Glyph>
        </Timeline>
      </Window>
    </>
  );
}
